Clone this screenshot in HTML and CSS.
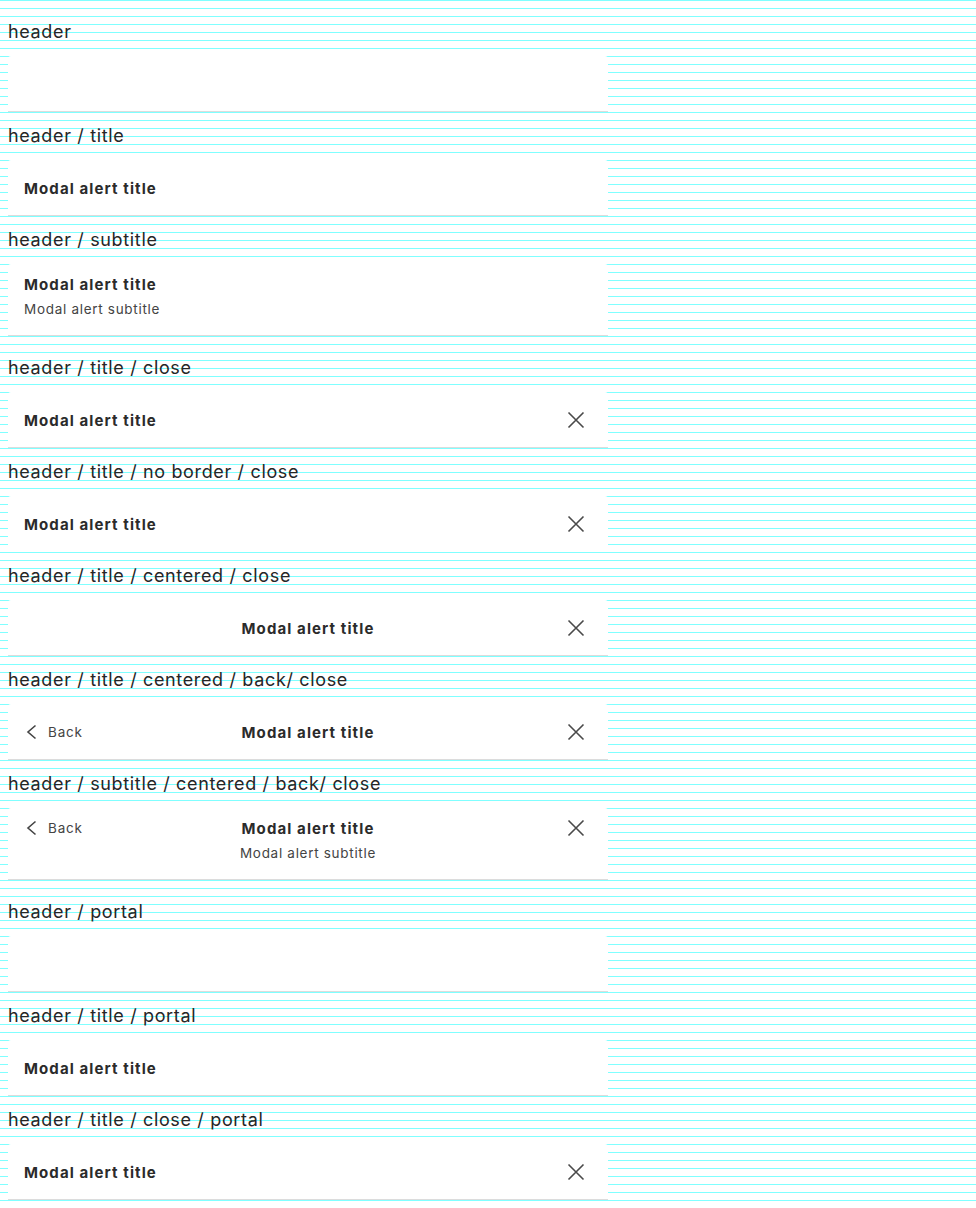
FILE: index.html
```html
<!DOCTYPE html>
<html lang="en">
<head>
<meta charset="utf-8">
<title>Modal header variants</title>
<link rel="stylesheet" href="styles.css">
</head>
<body>
<main class="page">

  <section class="variant">
    <h2 class="label">header</h2>
    <div class="card"></div>
  </section>

  <section class="variant">
    <h2 class="label">header / title</h2>
    <div class="card">
      <div class="title">Modal alert title</div>
    </div>
  </section>

  <section class="variant variant--tall">
    <h2 class="label">header / subtitle</h2>
    <div class="card card--tall">
      <div class="stack">
        <div class="title">Modal alert title</div>
        <div class="subtitle">Modal alert subtitle</div>
      </div>
    </div>
  </section>

  <section class="variant">
    <h2 class="label">header / title / close</h2>
    <div class="card card--split">
      <div class="title">Modal alert title</div>
      <button class="close" aria-label="Close"><svg viewBox="0 0 18 18" width="18" height="18"><path d="M1.5 1.5L16.5 16.5M16.5 1.5L1.5 16.5"/></svg></button>
    </div>
  </section>

  <section class="variant">
    <h2 class="label">header / title / no border / close</h2>
    <div class="card card--split card--noborder">
      <div class="title">Modal alert title</div>
      <button class="close" aria-label="Close"><svg viewBox="0 0 18 18" width="18" height="18"><path d="M1.5 1.5L16.5 16.5M16.5 1.5L1.5 16.5"/></svg></button>
    </div>
  </section>

  <section class="variant">
    <h2 class="label">header / title / centered / close</h2>
    <div class="card card--center">
      <div class="slot-left"></div>
      <div class="title">Modal alert title</div>
      <button class="close" aria-label="Close"><svg viewBox="0 0 18 18" width="18" height="18"><path d="M1.5 1.5L16.5 16.5M16.5 1.5L1.5 16.5"/></svg></button>
    </div>
  </section>

  <section class="variant">
    <h2 class="label">header / title / centered / back/ close</h2>
    <div class="card card--center">
      <button class="back"><svg viewBox="0 0 16 16" width="16" height="16"><path d="M11.5 1.5L4 8L11.5 14.5"/></svg><span>Back</span></button>
      <div class="title">Modal alert title</div>
      <button class="close" aria-label="Close"><svg viewBox="0 0 18 18" width="18" height="18"><path d="M1.5 1.5L16.5 16.5M16.5 1.5L1.5 16.5"/></svg></button>
    </div>
  </section>

  <section class="variant variant--tall">
    <h2 class="label">header / subtitle / centered / back/ close</h2>
    <div class="card card--center card--tall">
      <button class="back"><svg viewBox="0 0 16 16" width="16" height="16"><path d="M11.5 1.5L4 8L11.5 14.5"/></svg><span>Back</span></button>
      <div class="stack stack--center">
        <div class="title">Modal alert title</div>
        <div class="subtitle">Modal alert subtitle</div>
      </div>
      <button class="close" aria-label="Close"><svg viewBox="0 0 18 18" width="18" height="18"><path d="M1.5 1.5L16.5 16.5M16.5 1.5L1.5 16.5"/></svg></button>
    </div>
  </section>

  <section class="variant">
    <h2 class="label">header / portal</h2>
    <div class="card"></div>
  </section>

  <section class="variant">
    <h2 class="label">header / title / portal</h2>
    <div class="card">
      <div class="title">Modal alert title</div>
    </div>
  </section>

  <section class="variant">
    <h2 class="label">header / title / close / portal</h2>
    <div class="card card--split">
      <div class="title">Modal alert title</div>
      <button class="close" aria-label="Close"><svg viewBox="0 0 18 18" width="18" height="18"><path d="M1.5 1.5L16.5 16.5M16.5 1.5L1.5 16.5"/></svg></button>
    </div>
  </section>

</main>
</body>
</html>
```

FILE: styles.css
```css
html, body {
  margin: 0;
  padding: 0;
}

body {
  background-color: #ffffff;
  background-image: repeating-linear-gradient(to bottom, #80ffff 0, #80ffff 1px, transparent 1px, transparent 8px);
  font-family: "Inter", "Lato", "Liberation Sans", sans-serif;
  color: #2b2b2b;
  min-height: 1208px;
}

.page {
  padding-top: 16px;
}

.variant {
  padding-bottom: 8px;
}

.variant--tall {
  padding-bottom: 16px;
}

.label {
  margin: 0 0 8px 8px;
  height: 32px;
  line-height: 32px;
  font-size: 18px;
  font-weight: 400;
  letter-spacing: 0.65px;
  color: #262626;
}

.card {
  box-sizing: border-box;
  width: 600px;
  height: 56px;
  margin-left: 8px;
  padding: 0 16px;
  background: #ffffff;
  border-bottom: 1px solid #dcdcdc;
  border-radius: 3px 3px 0 0;
  display: flex;
  align-items: center;
}

.card--noborder {
  border-bottom-color: transparent;
}

.card--split {
  justify-content: space-between;
}

.card--center {
  display: grid;
  grid-template-columns: 1fr auto 1fr;
  align-items: center;
}

.card--tall {
  height: 72px;
  align-items: start;
  padding-top: 8px;
}

.title {
  font-size: 15px;
  font-weight: 700;
  line-height: 24px;
  letter-spacing: 1.1px;
  color: #2b2b2b;
  padding-top: 2px;
}

.card--tall .title {
  padding-top: 1px;
}

.subtitle {
  font-size: 13.5px;
  font-weight: 400;
  line-height: 24px;
  letter-spacing: 0.7px;
  color: #444444;
}

.stack--center {
  text-align: center;
}

.close {
  justify-self: end;
  width: 32px;
  height: 24px;
  padding: 0;
  border: 0;
  background: none;
  display: flex;
  align-items: center;
  justify-content: center;
}

.close svg path {
  fill: none;
  stroke: #4a4a4a;
  stroke-width: 1.6;
}

.back {
  justify-self: start;
  display: flex;
  align-items: center;
  gap: 8px;
  height: 24px;
  padding: 0;
  border: 0;
  background: none;
  font-family: inherit;
  font-size: 13.5px;
  letter-spacing: 0.8px;
  color: #444444;
}

.back svg path {
  fill: none;
  stroke: #444444;
  stroke-width: 1.6;
}
```
